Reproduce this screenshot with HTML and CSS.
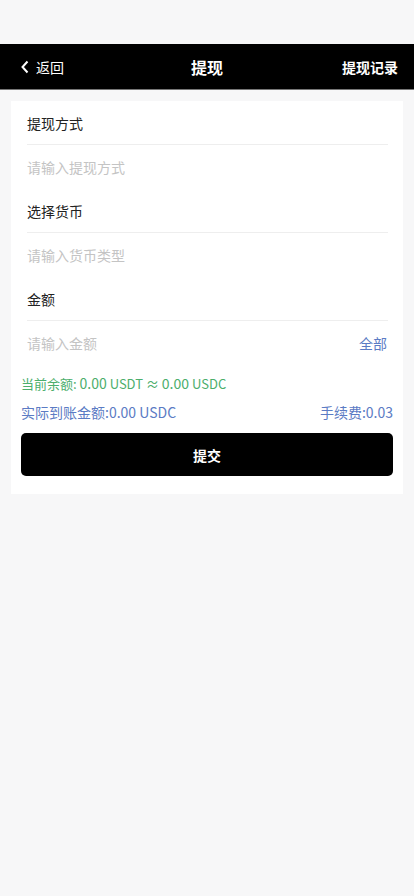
FILE: index.html
```html
<!DOCTYPE html>
<html>
<head>
  <meta charset="utf-8">
  <title>提现</title>
  <link rel="stylesheet" href="styles.css">
</head>
<body>
  <div class="status-bar"></div>
  <div class="nav-bar">
    <a class="nav-back" href="#">
      <svg width="10" height="14" viewBox="0 0 10 14"><path d="M7.5 1.5 L2.5 7 L7.5 12.5" fill="none" stroke="#fff" stroke-width="2"/></svg>
      <span>返回</span>
    </a>
    <div class="nav-title">提现</div>
    <a class="nav-right" href="#">提现记录</a>
  </div>

  <div class="card">
    <div class="row label">提现方式</div>
    <div class="row"><input type="text" placeholder="请输入提现方式"></div>
    <div class="row label">选择货币</div>
    <div class="row"><input type="text" placeholder="请输入货币类型"></div>
    <div class="row label">金额</div>
    <div class="row">
      <input type="text" placeholder="请输入金额">
      <span class="all">全部</span>
    </div>

    <div class="info">
      <div class="balance">当前余额: <b>0.00</b> USDT ≈ <b>0.00</b> USDC</div>
      <div class="arrive">
        <span>实际到账金额:0.00 USDC</span>
        <span>手续费:0.03</span>
      </div>
      <button type="button" class="submit">提交</button>
    </div>
  </div>
</body>
</html>
```

FILE: styles.css
```css
body {
  font-family: "Noto Sans CJK SC", "Noto Sans", sans-serif;
  background-color: #f7f7f8;
  color: #222;
  margin: 0;
  padding: 0;
}
.status-bar {
  height: 44px;
}
.nav-bar {
  display: flex;
  align-items: center;
  justify-content: space-between;
  height: 46px;
  background-color: #000;
  border-bottom: 1px solid #777;
  padding: 0 16px 0 20px;
  box-sizing: border-box;
  position: relative;
}
.nav-back, .nav-right {
  color: #fff;
  text-decoration: none;
  font-size: 14px;
}
.nav-back {
  display: flex;
  align-items: center;
  gap: 6px;
}
.nav-right {
  font-weight: 700;
}
.nav-title {
  position: absolute;
  left: 0;
  right: 0;
  text-align: center;
  color: #fff;
  font-size: 16px;
  font-weight: 700;
  pointer-events: none;
}
.card {
  background-color: #fff;
  margin: 11px 11px 0;
  padding-bottom: 18px;
}
.row {
  display: flex;
  align-items: center;
  justify-content: space-between;
  height: 44px;
  margin: 0 15px 0 16px;
  font-size: 14px;
  box-sizing: border-box;
}
.row.label {
  border-bottom: 1px solid #eee;
}
.row input {
  flex: 1;
  border: none;
  outline: none;
  padding: 0;
  font-family: inherit;
  font-size: 14px;
  color: #222;
  background: transparent;
}
.row input::placeholder {
  color: #c4c4c4;
}
.all {
  color: #5b7bc4;
  font-size: 14px;
  margin-right: 1px;
}
.info {
  padding: 0 10px;
}
.balance {
  color: #4cae6c;
  font-size: 13px;
  line-height: 22px;
  margin-top: 7px;
}
.balance b {
  font-weight: 400;
  font-size: 14px;
}
.arrive {
  display: flex;
  justify-content: space-between;
  color: #5b7bc4;
  font-size: 14px;
  line-height: 22px;
  margin-top: 6px;
}
.submit {
  display: block;
  width: 100%;
  height: 43px;
  margin-top: 10px;
  background-color: #000;
  color: #fff;
  border: none;
  border-radius: 5px;
  font-family: inherit;
  font-size: 14px;
  font-weight: 700;
}
```
